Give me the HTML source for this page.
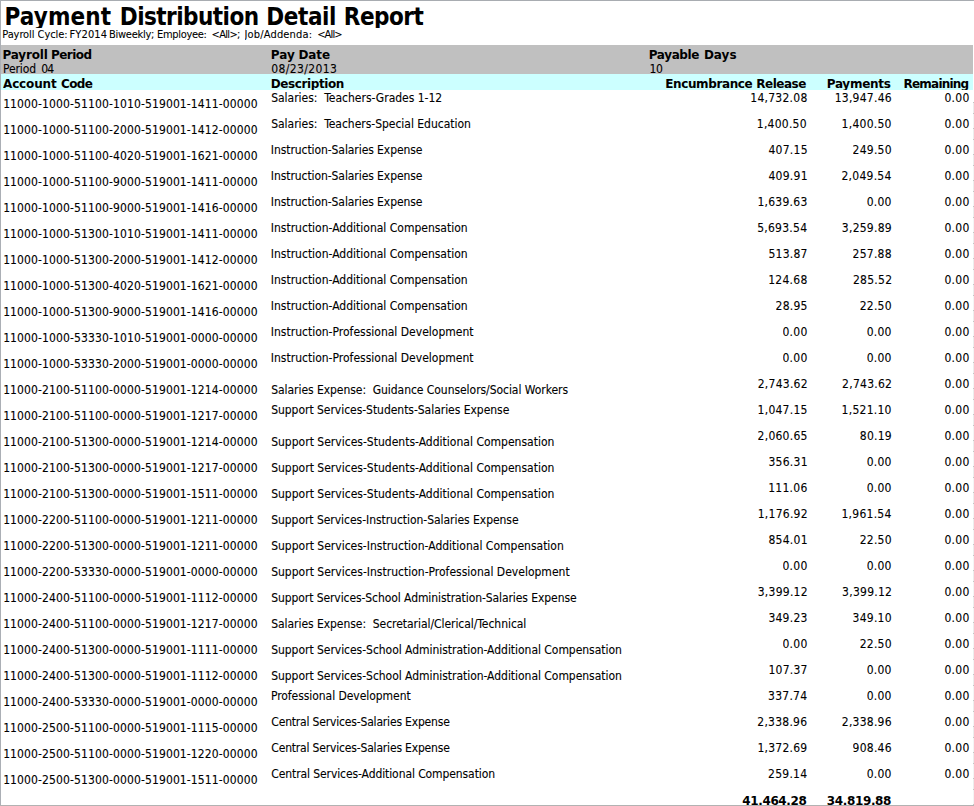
<!DOCTYPE html>
<html lang="en"><head><meta charset="utf-8"><title>Payment Distribution Detail Report</title>
<style>
html,body{margin:0;padding:0;}
body{width:974px;height:806px;overflow:hidden;background:#fff;position:relative;font-family:"DejaVu Sans Condensed", "Liberation Sans", sans-serif;color:#000;}
.pg{position:absolute;left:0;top:0;width:974px;height:806px;overflow:hidden;}
.bt{position:absolute;left:0;top:0;width:974px;height:1px;background:#a8acb1;}
.bl{position:absolute;left:0;top:0;width:1px;height:806px;background:#abafb5;}
.bb{position:absolute;left:0;top:805px;width:974px;height:1px;background:#b2b2b2;}
.br{position:absolute;left:973px;top:102px;width:1px;height:703px;background:repeating-linear-gradient(to bottom,#c4c4c4 0,#c4c4c4 1px,#ededed 1px,#ededed 11px,#c4c4c4 11px,#c4c4c4 12px,#f4f4f4 12px,#f4f4f4 26px);}
.g{position:absolute;left:1px;top:45px;width:972px;height:29px;background:#c0c0c0;}
.c{position:absolute;left:1px;top:74px;width:972px;height:16px;background:#ccffff;}
.x{position:absolute;white-space:pre;overflow:hidden;padding-right:3px;}
.n{font-size:12px;line-height:20px;-webkit-text-stroke:0.1px #000;}
.b{font-family:"DejaVu Sans","Liberation Sans",sans-serif;font-size:12px;font-weight:bold;line-height:20px;}
.s{font-size:11px;line-height:20px;-webkit-text-stroke:0.08px #000;}
.t{font-size:24px;font-weight:bold;line-height:40px;}
</style></head><body><div class="pg">
<div class="g"></div><div class="c"></div>
<div class="x t" style="left:4.52px;top:-3px;height:31px;letter-spacing:0.120px;">Payment</div>
<div class="x t" style="left:119.79px;top:-3px;height:31px;letter-spacing:-0.545px;">Distribution</div>
<div class="x t" style="left:266.33px;top:-3px;height:31px;letter-spacing:-0.421px;">Detail</div>
<div class="x t" style="left:343.79px;top:-3px;height:31px;letter-spacing:-0.508px;">Report</div>
<div class="x s" style="left:2.27px;top:25px;height:20px;letter-spacing:-0.093px;">Payroll</div>
<div class="x s" style="left:37.55px;top:25px;height:20px;letter-spacing:-0.078px;">Cycle:</div>
<div class="x s" style="left:69.42px;top:25px;height:20px;letter-spacing:0.150px;">FY2014</div>
<div class="x s" style="left:108.97px;top:25px;height:20px;letter-spacing:-0.265px;">Biweekly;</div>
<div class="x s" style="left:157.05px;top:25px;height:20px;letter-spacing:-0.328px;">Employee:</div>
<div class="x s" style="left:211.53px;top:25px;height:20px;letter-spacing:-0.671px;">&lt;All&gt;;</div>
<div class="x s" style="left:244.53px;top:25px;height:20px;letter-spacing:0.159px;">Job/Addenda:</div>
<div class="x s" style="left:317.16px;top:25px;height:20px;letter-spacing:-0.838px;">&lt;All&gt;</div>
<div class="x b" style="left:2.46px;top:45px;height:20px;letter-spacing:-0.167px;">Payroll</div>
<div class="x b" style="left:50.90px;top:45px;height:20px;letter-spacing:-0.529px;">Period</div>
<div class="x b" style="left:270.77px;top:45px;height:20px;letter-spacing:0.057px;">Pay</div>
<div class="x b" style="left:298.46px;top:45px;height:20px;letter-spacing:-0.082px;">Date</div>
<div class="x b" style="left:648.75px;top:45px;height:20px;letter-spacing:-0.376px;">Payable</div>
<div class="x b" style="left:703.90px;top:45px;height:20px;letter-spacing:-0.003px;">Days</div>
<div class="x n" style="left:2.89px;top:59px;height:20px;letter-spacing:-0.059px;">Period</div>
<div class="x n" style="left:41.35px;top:59px;height:20px;letter-spacing:-0.933px;">04</div>
<div class="x n" style="left:271.18px;top:59px;height:20px;letter-spacing:0.390px;">08/23/2013</div>
<div class="x n" style="left:649.40px;top:59px;height:20px;letter-spacing:-0.234px;">10</div>
<div class="x b" style="left:2.99px;top:74px;height:16px;letter-spacing:-0.134px;">Account</div>
<div class="x b" style="left:61.07px;top:74px;height:16px;letter-spacing:-0.682px;">Code</div>
<div class="x b" style="left:270.82px;top:74px;height:16px;letter-spacing:-0.415px;">Description</div>
<div class="x b" style="left:665.29px;top:74px;height:16px;letter-spacing:-0.392px;">Encumbrance</div>
<div class="x b" style="left:756.29px;top:74px;height:16px;letter-spacing:-0.477px;">Release</div>
<div class="x b" style="left:826.68px;top:74px;height:16px;letter-spacing:-0.258px;">Payments</div>
<div class="x b" style="left:903.53px;top:74px;height:16px;letter-spacing:-0.780px;">Remaining</div>
<div class="x n" style="left:3.13px;top:94px;height:20px;letter-spacing:0.119px;">11000-1000-51100-1010-519001-1411-00000</div>
<div class="x n" style="left:271.16px;top:88px;height:20px;letter-spacing:-0.011px;">Salaries:  Teachers-Grades 1-12</div>
<div class="x n" style="left:750.34px;top:88px;height:20px;letter-spacing:0.252px;">14,732.08</div>
<div class="x n" style="left:834.69px;top:88px;height:20px;letter-spacing:0.252px;">13,947.46</div>
<div class="x n" style="left:944.48px;top:88px;height:20px;letter-spacing:0.252px;">0.00</div>
<div class="x n" style="left:3.13px;top:120px;height:20px;letter-spacing:0.119px;">11000-1000-51100-2000-519001-1412-00000</div>
<div class="x n" style="left:271.16px;top:114px;height:20px;letter-spacing:-0.023px;">Salaries:  Teachers-Special Education</div>
<div class="x n" style="left:756.77px;top:114px;height:20px;letter-spacing:0.252px;">1,400.50</div>
<div class="x n" style="left:841.62px;top:114px;height:20px;letter-spacing:0.252px;">1,400.50</div>
<div class="x n" style="left:944.48px;top:114px;height:20px;letter-spacing:0.252px;">0.00</div>
<div class="x n" style="left:3.13px;top:146px;height:20px;letter-spacing:0.119px;">11000-1000-51100-4020-519001-1621-00000</div>
<div class="x n" style="left:270.84px;top:140px;height:20px;letter-spacing:-0.077px;">Instruction-Salaries Expense</div>
<div class="x n" style="left:768.49px;top:140px;height:20px;letter-spacing:0.252px;">407.15</div>
<div class="x n" style="left:852.56px;top:140px;height:20px;letter-spacing:0.252px;">249.50</div>
<div class="x n" style="left:944.48px;top:140px;height:20px;letter-spacing:0.252px;">0.00</div>
<div class="x n" style="left:3.13px;top:172px;height:20px;letter-spacing:0.119px;">11000-1000-51100-9000-519001-1411-00000</div>
<div class="x n" style="left:270.84px;top:166px;height:20px;letter-spacing:-0.077px;">Instruction-Salaries Expense</div>
<div class="x n" style="left:768.48px;top:166px;height:20px;letter-spacing:0.252px;">409.91</div>
<div class="x n" style="left:841.49px;top:166px;height:20px;letter-spacing:0.252px;">2,049.54</div>
<div class="x n" style="left:944.48px;top:166px;height:20px;letter-spacing:0.252px;">0.00</div>
<div class="x n" style="left:3.13px;top:198px;height:20px;letter-spacing:0.119px;">11000-1000-51100-9000-519001-1416-00000</div>
<div class="x n" style="left:270.84px;top:192px;height:20px;letter-spacing:-0.077px;">Instruction-Salaries Expense</div>
<div class="x n" style="left:757.44px;top:192px;height:20px;letter-spacing:0.252px;">1,639.63</div>
<div class="x n" style="left:866.65px;top:192px;height:20px;letter-spacing:0.252px;">0.00</div>
<div class="x n" style="left:944.48px;top:192px;height:20px;letter-spacing:0.252px;">0.00</div>
<div class="x n" style="left:3.13px;top:224px;height:20px;letter-spacing:0.119px;">11000-1000-51300-1010-519001-1411-00000</div>
<div class="x n" style="left:270.84px;top:218px;height:20px;letter-spacing:-0.004px;">Instruction-Additional Compensation</div>
<div class="x n" style="left:757.18px;top:218px;height:20px;letter-spacing:0.252px;">5,693.54</div>
<div class="x n" style="left:841.84px;top:218px;height:20px;letter-spacing:0.252px;">3,259.89</div>
<div class="x n" style="left:944.48px;top:218px;height:20px;letter-spacing:0.252px;">0.00</div>
<div class="x n" style="left:3.13px;top:250px;height:20px;letter-spacing:0.119px;">11000-1000-51300-2000-519001-1412-00000</div>
<div class="x n" style="left:270.84px;top:244px;height:20px;letter-spacing:-0.004px;">Instruction-Additional Compensation</div>
<div class="x n" style="left:768.44px;top:244px;height:20px;letter-spacing:0.252px;">513.87</div>
<div class="x n" style="left:852.59px;top:244px;height:20px;letter-spacing:0.252px;">257.88</div>
<div class="x n" style="left:944.48px;top:244px;height:20px;letter-spacing:0.252px;">0.00</div>
<div class="x n" style="left:3.13px;top:276px;height:20px;letter-spacing:0.119px;">11000-1000-51300-4020-519001-1621-00000</div>
<div class="x n" style="left:270.84px;top:270px;height:20px;letter-spacing:-0.004px;">Instruction-Additional Compensation</div>
<div class="x n" style="left:768.24px;top:270px;height:20px;letter-spacing:0.252px;">124.68</div>
<div class="x n" style="left:852.97px;top:270px;height:20px;letter-spacing:0.252px;">285.52</div>
<div class="x n" style="left:944.48px;top:270px;height:20px;letter-spacing:0.252px;">0.00</div>
<div class="x n" style="left:3.13px;top:302px;height:20px;letter-spacing:0.119px;">11000-1000-51300-9000-519001-1416-00000</div>
<div class="x n" style="left:270.84px;top:296px;height:20px;letter-spacing:-0.004px;">Instruction-Additional Compensation</div>
<div class="x n" style="left:775.59px;top:296px;height:20px;letter-spacing:0.252px;">28.95</div>
<div class="x n" style="left:859.66px;top:296px;height:20px;letter-spacing:0.252px;">22.50</div>
<div class="x n" style="left:944.48px;top:296px;height:20px;letter-spacing:0.252px;">0.00</div>
<div class="x n" style="left:3.13px;top:328px;height:20px;letter-spacing:0.119px;">11000-1000-53330-1010-519001-0000-00000</div>
<div class="x n" style="left:270.84px;top:322px;height:20px;letter-spacing:0.002px;">Instruction-Professional Development</div>
<div class="x n" style="left:782.51px;top:322px;height:20px;letter-spacing:0.252px;">0.00</div>
<div class="x n" style="left:866.65px;top:322px;height:20px;letter-spacing:0.252px;">0.00</div>
<div class="x n" style="left:944.48px;top:322px;height:20px;letter-spacing:0.252px;">0.00</div>
<div class="x n" style="left:3.13px;top:354px;height:20px;letter-spacing:0.119px;">11000-1000-53330-2000-519001-0000-00000</div>
<div class="x n" style="left:270.84px;top:348px;height:20px;letter-spacing:0.002px;">Instruction-Professional Development</div>
<div class="x n" style="left:782.51px;top:348px;height:20px;letter-spacing:0.252px;">0.00</div>
<div class="x n" style="left:866.65px;top:348px;height:20px;letter-spacing:0.252px;">0.00</div>
<div class="x n" style="left:944.48px;top:348px;height:20px;letter-spacing:0.252px;">0.00</div>
<div class="x n" style="left:3.13px;top:380px;height:20px;letter-spacing:0.119px;">11000-2100-51100-0000-519001-1214-00000</div>
<div class="x n" style="left:271.16px;top:380px;height:20px;letter-spacing:-0.050px;">Salaries Expense:  Guidance Counselors/Social Workers</div>
<div class="x n" style="left:757.76px;top:374px;height:20px;letter-spacing:0.252px;">2,743.62</div>
<div class="x n" style="left:842.10px;top:374px;height:20px;letter-spacing:0.252px;">2,743.62</div>
<div class="x n" style="left:944.48px;top:374px;height:20px;letter-spacing:0.252px;">0.00</div>
<div class="x n" style="left:3.13px;top:406px;height:20px;letter-spacing:0.119px;">11000-2100-51100-0000-519001-1217-00000</div>
<div class="x n" style="left:271.16px;top:400px;height:20px;letter-spacing:-0.035px;">Support Services-Students-Salaries Expense</div>
<div class="x n" style="left:757.59px;top:400px;height:20px;letter-spacing:0.252px;">1,047.15</div>
<div class="x n" style="left:841.62px;top:400px;height:20px;letter-spacing:0.252px;">1,521.10</div>
<div class="x n" style="left:944.48px;top:400px;height:20px;letter-spacing:0.252px;">0.00</div>
<div class="x n" style="left:3.13px;top:432px;height:20px;letter-spacing:0.119px;">11000-2100-51300-0000-519001-1214-00000</div>
<div class="x n" style="left:271.16px;top:432px;height:20px;letter-spacing:0.009px;">Support Services-Students-Additional Compensation</div>
<div class="x n" style="left:757.59px;top:426px;height:20px;letter-spacing:0.252px;">2,060.65</div>
<div class="x n" style="left:859.84px;top:426px;height:20px;letter-spacing:0.252px;">80.19</div>
<div class="x n" style="left:944.48px;top:426px;height:20px;letter-spacing:0.252px;">0.00</div>
<div class="x n" style="left:3.13px;top:458px;height:20px;letter-spacing:0.119px;">11000-2100-51300-0000-519001-1217-00000</div>
<div class="x n" style="left:271.16px;top:458px;height:20px;letter-spacing:0.009px;">Support Services-Students-Additional Compensation</div>
<div class="x n" style="left:768.48px;top:452px;height:20px;letter-spacing:0.252px;">356.31</div>
<div class="x n" style="left:866.65px;top:452px;height:20px;letter-spacing:0.252px;">0.00</div>
<div class="x n" style="left:944.48px;top:452px;height:20px;letter-spacing:0.252px;">0.00</div>
<div class="x n" style="left:3.13px;top:484px;height:20px;letter-spacing:0.119px;">11000-2100-51300-0000-519001-1511-00000</div>
<div class="x n" style="left:271.16px;top:484px;height:20px;letter-spacing:0.009px;">Support Services-Students-Additional Compensation</div>
<div class="x n" style="left:768.24px;top:478px;height:20px;letter-spacing:0.252px;">111.06</div>
<div class="x n" style="left:866.65px;top:478px;height:20px;letter-spacing:0.252px;">0.00</div>
<div class="x n" style="left:944.48px;top:478px;height:20px;letter-spacing:0.252px;">0.00</div>
<div class="x n" style="left:3.13px;top:510px;height:20px;letter-spacing:0.119px;">11000-2200-51100-0000-519001-1211-00000</div>
<div class="x n" style="left:271.16px;top:510px;height:20px;letter-spacing:-0.041px;">Support Services-Instruction-Salaries Expense</div>
<div class="x n" style="left:757.76px;top:504px;height:20px;letter-spacing:0.252px;">1,176.92</div>
<div class="x n" style="left:841.49px;top:504px;height:20px;letter-spacing:0.252px;">1,961.54</div>
<div class="x n" style="left:944.48px;top:504px;height:20px;letter-spacing:0.252px;">0.00</div>
<div class="x n" style="left:3.13px;top:536px;height:20px;letter-spacing:0.119px;">11000-2200-51300-0000-519001-1211-00000</div>
<div class="x n" style="left:271.16px;top:536px;height:20px;letter-spacing:0.004px;">Support Services-Instruction-Additional Compensation</div>
<div class="x n" style="left:768.48px;top:530px;height:20px;letter-spacing:0.252px;">854.01</div>
<div class="x n" style="left:859.66px;top:530px;height:20px;letter-spacing:0.252px;">22.50</div>
<div class="x n" style="left:944.48px;top:530px;height:20px;letter-spacing:0.252px;">0.00</div>
<div class="x n" style="left:3.13px;top:562px;height:20px;letter-spacing:0.119px;">11000-2200-53330-0000-519001-0000-00000</div>
<div class="x n" style="left:271.16px;top:562px;height:20px;letter-spacing:0.006px;">Support Services-Instruction-Professional Development</div>
<div class="x n" style="left:782.51px;top:556px;height:20px;letter-spacing:0.252px;">0.00</div>
<div class="x n" style="left:866.65px;top:556px;height:20px;letter-spacing:0.252px;">0.00</div>
<div class="x n" style="left:944.48px;top:556px;height:20px;letter-spacing:0.252px;">0.00</div>
<div class="x n" style="left:3.13px;top:588px;height:20px;letter-spacing:0.119px;">11000-2400-51100-0000-519001-1112-00000</div>
<div class="x n" style="left:271.16px;top:588px;height:20px;letter-spacing:-0.079px;">Support Services-School Administration-Salaries Expense</div>
<div class="x n" style="left:757.76px;top:582px;height:20px;letter-spacing:0.252px;">3,399.12</div>
<div class="x n" style="left:842.10px;top:582px;height:20px;letter-spacing:0.252px;">3,399.12</div>
<div class="x n" style="left:944.48px;top:582px;height:20px;letter-spacing:0.252px;">0.00</div>
<div class="x n" style="left:3.13px;top:614px;height:20px;letter-spacing:0.119px;">11000-2400-51100-0000-519001-1217-00000</div>
<div class="x n" style="left:271.16px;top:614px;height:20px;letter-spacing:-0.048px;">Salaries Expense:  Secretarial/Clerical/Technical</div>
<div class="x n" style="left:768.38px;top:608px;height:20px;letter-spacing:0.252px;">349.23</div>
<div class="x n" style="left:852.56px;top:608px;height:20px;letter-spacing:0.252px;">349.10</div>
<div class="x n" style="left:944.48px;top:608px;height:20px;letter-spacing:0.252px;">0.00</div>
<div class="x n" style="left:3.13px;top:640px;height:20px;letter-spacing:0.119px;">11000-2400-51300-0000-519001-1111-00000</div>
<div class="x n" style="left:271.16px;top:640px;height:20px;letter-spacing:-0.037px;">Support Services-School Administration-Additional Compensation</div>
<div class="x n" style="left:782.51px;top:634px;height:20px;letter-spacing:0.252px;">0.00</div>
<div class="x n" style="left:859.66px;top:634px;height:20px;letter-spacing:0.252px;">22.50</div>
<div class="x n" style="left:944.48px;top:634px;height:20px;letter-spacing:0.252px;">0.00</div>
<div class="x n" style="left:3.13px;top:666px;height:20px;letter-spacing:0.119px;">11000-2400-51300-0000-519001-1112-00000</div>
<div class="x n" style="left:271.16px;top:666px;height:20px;letter-spacing:-0.037px;">Support Services-School Administration-Additional Compensation</div>
<div class="x n" style="left:768.44px;top:660px;height:20px;letter-spacing:0.252px;">107.37</div>
<div class="x n" style="left:866.65px;top:660px;height:20px;letter-spacing:0.252px;">0.00</div>
<div class="x n" style="left:944.48px;top:660px;height:20px;letter-spacing:0.252px;">0.00</div>
<div class="x n" style="left:3.13px;top:692px;height:20px;letter-spacing:0.119px;">11000-2400-53330-0000-519001-0000-00000</div>
<div class="x n" style="left:270.90px;top:686px;height:20px;letter-spacing:-0.051px;">Professional Development</div>
<div class="x n" style="left:768.05px;top:686px;height:20px;letter-spacing:0.252px;">337.74</div>
<div class="x n" style="left:866.65px;top:686px;height:20px;letter-spacing:0.252px;">0.00</div>
<div class="x n" style="left:944.48px;top:686px;height:20px;letter-spacing:0.252px;">0.00</div>
<div class="x n" style="left:3.13px;top:718px;height:20px;letter-spacing:0.119px;">11000-2500-51100-0000-519001-1115-00000</div>
<div class="x n" style="left:271.30px;top:712px;height:20px;letter-spacing:-0.177px;">Central Services-Salaries Expense</div>
<div class="x n" style="left:757.29px;top:712px;height:20px;letter-spacing:0.252px;">2,338.96</div>
<div class="x n" style="left:841.78px;top:712px;height:20px;letter-spacing:0.252px;">2,338.96</div>
<div class="x n" style="left:944.48px;top:712px;height:20px;letter-spacing:0.252px;">0.00</div>
<div class="x n" style="left:3.13px;top:744px;height:20px;letter-spacing:0.119px;">11000-2500-51100-0000-519001-1220-00000</div>
<div class="x n" style="left:271.30px;top:738px;height:20px;letter-spacing:-0.177px;">Central Services-Salaries Expense</div>
<div class="x n" style="left:757.40px;top:738px;height:20px;letter-spacing:0.252px;">1,372.69</div>
<div class="x n" style="left:852.58px;top:738px;height:20px;letter-spacing:0.252px;">908.46</div>
<div class="x n" style="left:944.48px;top:738px;height:20px;letter-spacing:0.252px;">0.00</div>
<div class="x n" style="left:3.13px;top:770px;height:20px;letter-spacing:0.119px;">11000-2500-51300-0000-519001-1511-00000</div>
<div class="x n" style="left:271.30px;top:764px;height:20px;letter-spacing:-0.095px;">Central Services-Additional Compensation</div>
<div class="x n" style="left:768.05px;top:764px;height:20px;letter-spacing:0.252px;">259.14</div>
<div class="x n" style="left:866.65px;top:764px;height:20px;letter-spacing:0.252px;">0.00</div>
<div class="x n" style="left:944.48px;top:764px;height:20px;letter-spacing:0.252px;">0.00</div>
<div class="x b" style="left:742.29px;top:791px;height:20px;letter-spacing:-0.374px;">41,464.28</div>
<div class="x b" style="left:826.85px;top:791px;height:20px;letter-spacing:-0.374px;">34,819.88</div>
<div class="bt"></div><div class="bl"></div><div class="bb"></div><div class="br"></div>
</div></body></html>
